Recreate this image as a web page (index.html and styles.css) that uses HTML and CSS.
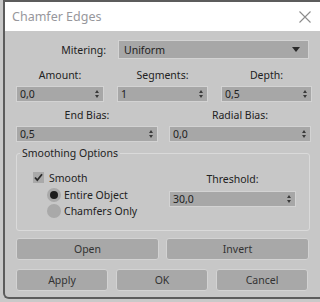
FILE: index.html
```html
<!DOCTYPE html>
<html lang="en">
<head>
    <meta charset="UTF-8">
    <title>Chamfer Edges</title>
    <link rel="stylesheet" href="styles.css">
</head>
<body>

<div class="dialog">
    <!-- Title bar -->
    <div class="titlebar">
        <span class="title">Chamfer Edges</span>
        <svg class="close" width="12" height="12" viewBox="0 0 12 12">
            <path d="M0.5 0.5 L11.5 11.5 M11.5 0.5 L0.5 11.5" stroke="#8c8c8c" stroke-width="1.1" fill="none"/>
        </svg>
    </div>

    <div class="content">
        <!-- Mitering -->
        <div class="mitering-row">
            <label class="mitering-label">Mitering:</label>
            <div class="dropdown">
                <span>Uniform</span>
                <span class="drop-arrow"></span>
            </div>
        </div>

        <!-- Amount / Segments / Depth -->
        <div class="grid3 labels first">
            <span>Amount:</span>
            <span>Segments:</span>
            <span>Depth:</span>
        </div>
        <div class="grid3">
            <div class="spinner"><span>0,0</span><i class="arrows"></i></div>
            <div class="spinner"><span>1</span><i class="arrows"></i></div>
            <div class="spinner"><span>0,5</span><i class="arrows"></i></div>
        </div>

        <!-- Bias -->
        <div class="grid2 labels second">
            <span>End Bias:</span>
            <span>Radial Bias:</span>
        </div>
        <div class="grid2">
            <div class="spinner"><span>0,5</span><i class="arrows"></i></div>
            <div class="spinner"><span>0,0</span><i class="arrows"></i></div>
        </div>

        <!-- Smoothing Options -->
        <fieldset class="group">
            <legend>Smoothing Options</legend>
            <div class="group-body">
                <div class="options">
                    <div class="check-row">
                        <span class="checkbox">
                            <svg width="11" height="11" viewBox="0 0 11 11">
                                <path d="M2 5.5 L4.3 8.2 L9 2.2" stroke="#2a2a2a" stroke-width="1.8" fill="none"/>
                            </svg>
                        </span>
                        <span>Smooth</span>
                    </div>
                    <div class="radio-row">
                        <span class="radio on"></span>
                        <span>Entire Object</span>
                    </div>
                    <div class="radio-row">
                        <span class="radio"></span>
                        <span>Chamfers Only</span>
                    </div>
                </div>
                <div class="threshold">
                    <span class="threshold-label">Threshold:</span>
                    <div class="spinner"><span>30,0</span><i class="arrows"></i></div>
                </div>
            </div>
        </fieldset>

        <!-- Buttons -->
        <div class="grid2 buttons">
            <button>Open</button>
            <button>Invert</button>
        </div>
        <div class="grid3 buttons">
            <button>Apply</button>
            <button>OK</button>
            <button>Cancel</button>
        </div>
    </div>
</div>

</body>
</html>
```

FILE: styles.css
```css
body {
    margin: 0;
    width: 320px;
    height: 302px;
    overflow: hidden;
    background-color: #c9c9c9;
    font-family: "Noto Sans", "Open Sans", sans-serif;
    font-size: 10.5px;
    color: #222222;
}
.dialog {
    margin-left: 3px;
    width: 317px;
    height: 299px;
    box-sizing: border-box;
    border: 2px solid #5c5c5c;
    border-right: none;
    border-bottom-left-radius: 6px;
    background-color: #c7c7c7;
    overflow: hidden;
}
.titlebar {
    height: 29px;
    background-color: #ffffff;
    display: flex;
    align-items: center;
    justify-content: space-between;
    padding: 0 9px 0 7px;
}
.title {
    font-size: 12.5px;
    color: #97979c;
}
.close {
    display: block;
}
.content {
    padding: 9px 9px 0 11px;
}
.mitering-row {
    display: flex;
    align-items: center;
    height: 19px;
}
.mitering-label {
    width: 90px;
    text-align: right;
    margin-right: 12px;
}
.dropdown {
    width: 191px;
    height: 19px;
    box-sizing: border-box;
    background-color: #a7a7a7;
    border: 1px solid #d3d3d3;
    display: flex;
    align-items: center;
    justify-content: space-between;
    padding: 0 8px 0 5px;
}
.drop-arrow {
    width: 0;
    height: 0;
    border-left: 4px solid transparent;
    border-right: 4px solid transparent;
    border-top: 5px solid #2a2a2a;
}
.grid3 {
    display: grid;
    grid-template-columns: 88px 91px 91px;
    column-gap: 13px;
}
.grid2 {
    display: grid;
    grid-template-columns: 142px 142px;
    column-gap: 11px;
}
.labels {
    text-align: center;
    height: 14px;
    line-height: 14px;
    margin-bottom: 4px;
}
.labels.first {
    margin-top: 9px;
}
.labels.second {
    margin-top: 6px;
}
.spinner {
    height: 16px;
    box-sizing: border-box;
    background-color: #a7a7a7;
    border: 1px solid #d3d3d3;
    display: flex;
    align-items: center;
    justify-content: space-between;
    padding: 0 3px 0 3px;
}
.arrows {
    position: relative;
    width: 5px;
    height: 8px;
}
.arrows::before, .arrows::after {
    content: "";
    position: absolute;
    left: 0;
    border-left: 2.5px solid transparent;
    border-right: 2.5px solid transparent;
}
.arrows::before {
    top: 0;
    border-bottom: 3px solid #3a3a3a;
}
.arrows::after {
    bottom: 0;
    border-top: 3px solid #3a3a3a;
}
.group {
    margin: 4px 1px 0 0;
    padding: 0;
    height: 85px;
    box-sizing: border-box;
    border: 1px solid #dadada;
    border-radius: 3px;
}
.group legend {
    margin-left: 3px;
    padding: 0 2px;
    line-height: 14px;
}
.group-body {
    display: flex;
    justify-content: space-between;
    padding: 11px 13px 0 16px;
}
.options {
    display: flex;
    flex-direction: column;
}
.check-row, .radio-row {
    display: flex;
    align-items: center;
}
.check-row {
    height: 13px;
    margin-bottom: 3px;
}
.checkbox {
    width: 11px;
    height: 11px;
    background-color: #a9a9a9;
    margin-right: 5px;
    display: flex;
}
.radio-row {
    height: 16px;
    margin-left: 14px;
}
.radio {
    width: 14px;
    height: 14px;
    border-radius: 50%;
    background-color: #a9a9a9;
    margin-right: 3px;
    display: flex;
    align-items: center;
    justify-content: center;
}
.radio.on::after {
    content: "";
    width: 8px;
    height: 8px;
    border-radius: 50%;
    background-color: #1e1e1e;
}
.threshold {
    width: 127px;
    display: flex;
    flex-direction: column;
    align-items: center;
    padding-top: 1px;
}
.threshold-label {
    height: 14px;
    line-height: 14px;
    margin-bottom: 5px;
}
.threshold .spinner {
    width: 100%;
}
.buttons button {
    height: 22px;
    font-family: inherit;
    font-size: 10.5px;
    color: #333333;
    background-color: #a8a8a8;
    border: 1px solid #d3d3d3;
    border-radius: 3px;
    padding: 0;
}
.grid2.buttons {
    margin-top: 7px;
    grid-template-columns: 143px 143px;
    column-gap: 7px;
}
.grid3.buttons {
    margin-top: 9px;
    grid-template-columns: 92px 92px 92px;
    column-gap: 8px;
}
```
